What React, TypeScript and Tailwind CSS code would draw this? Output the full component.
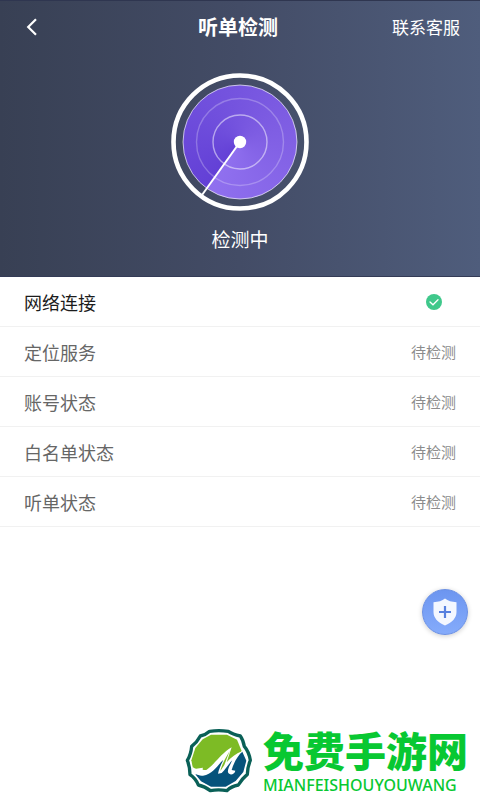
import { clsx } from "clsx";

const checks = [
  { label: "网络连接", done: true },
  { label: "定位服务", done: false },
  { label: "账号状态", done: false },
  { label: "白名单状态", done: false },
  { label: "听单状态", done: false },
];

function Radar() {
  return (
    <div className="relative mx-auto size-[138px]">
      <div className="absolute inset-3 rounded-full bg-[conic-gradient(from_216deg,#6340d6,#6f4edc_25%,#7f5ee3_60%,#9070ef)]" />
      <svg
        viewBox="0 0 138 138"
        fill="none"
        stroke="white"
        className="absolute inset-0 size-full"
        aria-hidden="true"
      >
        <circle cx="69" cy="69" r="66.5" strokeWidth="4.6" />
        <circle cx="69" cy="69" r="57" strokeOpacity="0.65" strokeWidth="1" />
        <circle cx="69" cy="69" r="43.5" strokeOpacity="0.25" strokeWidth="1.4" />
        <circle cx="69" cy="69" r="27" strokeOpacity="0.5" strokeWidth="1.4" />
        <path d="M69 69 31 122" strokeWidth="2" />
        <circle cx="69" cy="69" r="6.2" fill="white" stroke="none" />
      </svg>
    </div>
  );
}

function Header() {
  return (
    <header className="border-t border-b border-t-[#2f3650] border-b-[#343b56] bg-linear-to-r from-[#384054] via-[#434c66] to-[#4f5d7c] pb-[23px] text-white">
      <div className="grid h-[52px] grid-cols-[1fr_auto_1fr] items-center pr-5 pl-4">
        <button type="button" aria-label="返回" className="flex w-8 justify-center">
          <svg
            viewBox="0 0 12 18"
            className="h-[18px] w-3"
            fill="none"
            stroke="currentColor"
            strokeWidth="2.2"
          >
            <path d="M10 1.2 2.2 9l7.8 7.8" />
          </svg>
        </button>
        <h1 className="text-[20px] leading-7 font-bold">听单检测</h1>
        <button type="button" className="justify-self-end text-[17px] leading-6">
          联系客服
        </button>
      </div>
      <div className="pt-5">
        <Radar />
        <p className="mt-3.5 text-center text-[19px] leading-7">检测中</p>
      </div>
    </header>
  );
}

function DoneIcon() {
  return (
    <svg viewBox="0 0 16 16" className="mr-3.5 size-4" role="img" aria-label="正常">
      <circle cx="8" cy="8" r="8" fill="#3fc88b" />
      <path
        d="m4 8 3 2.8 5-5"
        fill="none"
        stroke="white"
        strokeWidth="1.3"
        strokeLinecap="round"
      />
    </svg>
  );
}

function CheckList() {
  return (
    <ul>
      {checks.map((item) => (
        <li
          key={item.label}
          className="flex h-[50px] items-center justify-between border-b border-[#f1f1f1] px-6"
        >
          <span
            className={clsx(
              "text-[18px] leading-6",
              item.done ? "text-[#1c1c1c]" : "text-[#666]"
            )}
          >
            {item.label}
          </span>
          {item.done ? (
            <DoneIcon />
          ) : (
            <span className="text-[15px] leading-6 text-[#8c8c8c]">待检测</span>
          )}
        </li>
      ))}
    </ul>
  );
}

function ShieldButton() {
  return (
    <button
      type="button"
      aria-label="安全中心"
      className="fixed right-3 bottom-[165px] flex size-[46px] items-center justify-center rounded-full border border-[#6a8fe2] bg-linear-to-b from-[#6c95f0] to-[#85abfb] shadow-[0_1px_5px_rgba(0,0,0,0.2)]"
    >
      <svg viewBox="0 0 26 28" className="h-7 w-[26px]" aria-hidden="true">
        <path
          d="M13 .5c3 2.4 6.500 3.500 11.500 3.700V14c0 6-4.500 10.500-11.500 13.500C6 24.500 1.500 20 1.500 14V4.200C6.500 4 10 2.900 13 .5Z"
          fill="#f3f7ff"
        />
        <path d="M13 8v12M7 14h12" stroke="#5680df" strokeWidth="2.200" />
      </svg>
    </button>
  );
}

function Logo() {
  return (
    <svg viewBox="12 20 204 204" className="size-[68px]" aria-hidden="true">
      <path
        d="M86 33Q113 29 142 33Q155 42 178 47Q186 58 190 78Q204 94 208 120Q200 138 199 162Q184 174 172 194Q150 198 138 211Q112 206 88 211Q72 198 52 194Q44 174 27 163Q27 140 19 120Q30 102 32 78Q48 66 58 47Q74 44 86 33Z"
        fill="white"
        stroke="#0a6057"
        strokeWidth="10"
        strokeLinejoin="round"
      />
      <path
        d="M90 43H138L168 58L182 92L150 118L128 132L80 150L36 146L31 120L43 83L65 57Z"
        fill="#7dbb25"
      />
      <path
        d="M184 94L196 121L187 155L164 182L134 199L90 199L60 183L43 162C82 170 98 138 128 118L120 156L152 116Z"
        fill="#06537b"
      />
      <path d="M128 119L151 82L137 127L120 154Z" fill="#7dbb25" />
      <path
        d="M33 138C42 150 52 143 66 142C62 152 70 154 80 146C104 128 120 100 152 81L137 126C150 111 165 99 185 93C170 106 157 130 152 149L163 151C160 164 145 166 141 156C139 146 148 132 154 120C140 133 134 148 122 158L111 160C114 145 121 132 127 118C108 136 96 162 66 166C50 168 38 157 33 138Z"
        fill="white"
      />
      <path d="M146 92L130 134L118 152C121 138 128 122 146 92Z" fill="#7dbb25" />
    </svg>
  );
}

function SiteMark() {
  return (
    <footer className="mt-auto flex items-end justify-end gap-2.5 pr-3 pb-[5px]">
      <Logo />
      <div className="flex flex-col text-[#08c832]">
        <span className="text-[41px] leading-[52px] font-black">免费手游网</span>
        <span className="font-['Noto_Sans','Noto_Sans_CJK_SC',sans-serif] text-[16px] leading-5 font-medium">
          MIANFEISHOUYOUWANG
        </span>
      </div>
    </footer>
  );
}

export default function App() {
  return (
    <main className="flex min-h-screen flex-col bg-white font-['Noto_Sans_CJK_SC',sans-serif]">
      <Header />
      <CheckList />
      <ShieldButton />
      <SiteMark />
    </main>
  );
}
